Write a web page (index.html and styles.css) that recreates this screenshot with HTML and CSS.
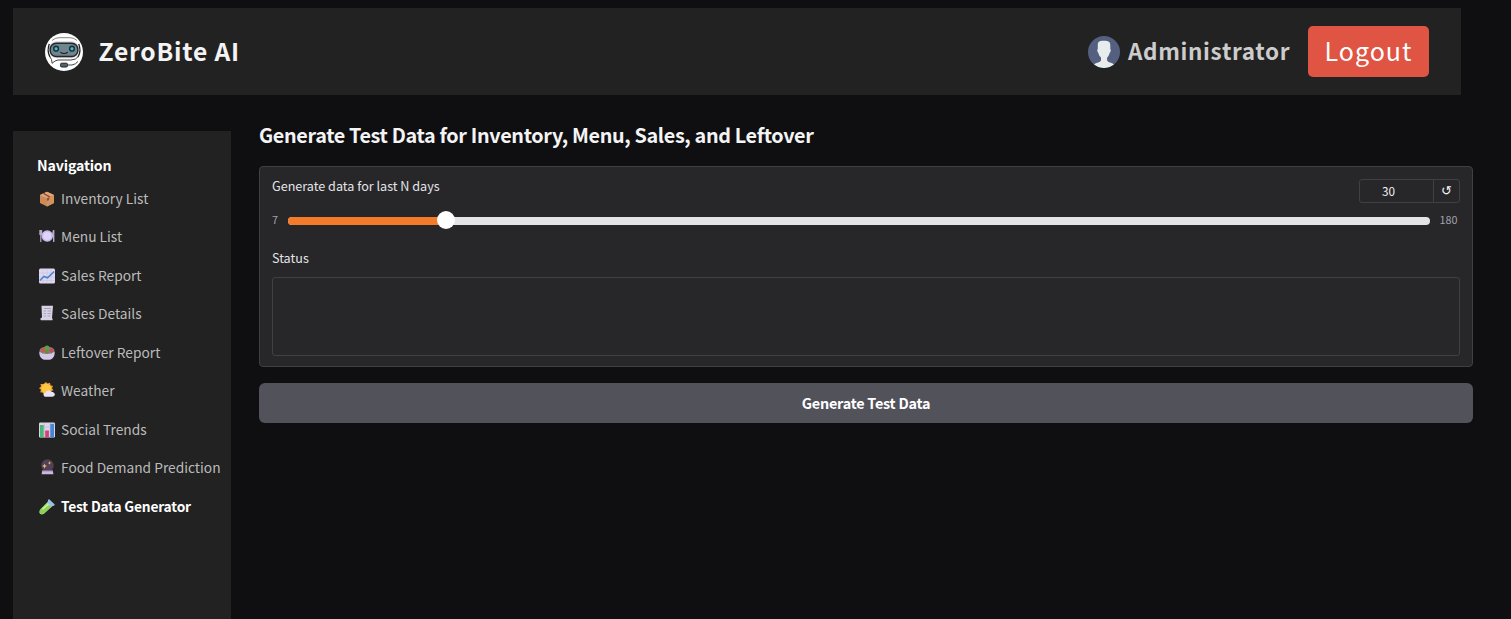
FILE: index.html
```html
<!DOCTYPE html>
<html lang="en">
<head>
<meta charset="utf-8">
<title>ZeroBite AI</title>
<link rel="stylesheet" href="styles.css">
</head>
<body>
<header class="topbar">
  <svg class="logo" viewBox="0 0 38 38">
    <circle cx="19" cy="19" r="19" fill="#fff"/>
    <path d="M7 7.5Q10 4.7 14 4.7H25Q29 4.7 32 7.5" fill="none" stroke="#666" stroke-width=".8"/>
    <path d="M4.3 11Q1.8 18 5 24M33.7 11Q36.4 18 33 24" fill="none" stroke="#222" stroke-width="1.4"/>
    <rect x="3.8" y="8.2" width="30.4" height="17" rx="8" fill="#d5d4d6"/>
    <rect x="5.2" y="10.2" width="27.6" height="13.3" rx="6" fill="#70858f" stroke="#20282c" stroke-width="1.4"/>
    <circle cx="11.1" cy="15.7" r="2.4" fill="#4d7885" stroke="#123640" stroke-width="1.4"/>
    <circle cx="27" cy="15.7" r="2.4" fill="#4d7885" stroke="#123640" stroke-width="1.4"/>
    <circle cx="11.1" cy="15.7" r="1.3" fill="#63b6c5"/><circle cx="27" cy="15.7" r="1.3" fill="#63b6c5"/>
    <path d="M15.4 19.2Q19 21.8 22.7 19.2" fill="none" stroke="#111b20" stroke-width="1.2"/>
    <path d="M5 24Q7 26 7.1 30.3Q10.2 27.2 13 27H26Q31 27 33.8 23M22.5 32H27Q31 31.2 33 28.5" fill="none" stroke="#444" stroke-width="1"/>
    <rect x="15.5" y="30.2" width="7" height="3.8" rx="1.2" fill="#52636b" stroke="#1c2225"/>
  </svg>
  <div class="brand">ZeroBite AI</div>
  <svg class="avatar" viewBox="0 0 32 32">
    <circle cx="16" cy="16" r="16" fill="#556080"/>
    <path d="M6 28.5C8 26.4 13 26.5 13 24V21.5C10.9 20 10.6 17.3 10.2 16.5C9.1 15.8 9 13.7 9.8 13.1V8.5C9.8 5.2 12.8 4.8 16.5 4.8C20.3 4.8 22.3 6 22.3 9V13.1C23 13.7 22.9 15.8 21.8 16.5C21.4 18 20.8 20.3 19.1 21.5V24C19.1 26.5 24 26.4 26 28.5A16 16 0 0 1 6 28.5Z" fill="#e7eced"/>
  </svg>
  <div class="user">Administrator</div>
  <button class="logout">Logout</button>
</header>
<div class="page">
  <nav class="sidebar">
    <div class="nav-title">Navigation</div>
    <a class="nav-item"><svg viewBox="0 0 16 16"><path d="M1 4L8 .8L15 4V12L8 15.5L1 12Z" fill="#cc8a59"/><path d="M1 4L8 .8L15 4L8 7.3Z" fill="#e2a773"/><path d="M8 7.3L15 4V12L8 15.5Z" fill="#d4935e"/><path d="M3.8 2.7L5.2 2.1L11.5 5.5L10 6.4ZM8 7.3L10.2 6.3V9L8 10Z" fill="#875343"/></svg><span>Inventory List</span></a>
    <a class="nav-item"><svg viewBox="0 0 16 16"><path d="M.3 2V7H1.2V14H2.4V7H3.2V2M14 2Q12.9 4 13.1 9H14V14H15.4V2Z" fill="#b7a9c4"/><circle cx="8.2" cy="8" r="5.8" fill="#c9b9ef"/><circle cx="8.2" cy="8" r="4" fill="#dfd5fa"/></svg><span>Menu List</span></a>
    <a class="nav-item"><svg viewBox="0 0 16 16"><rect y=".5" width="16" height="15" rx="1.5" fill="#ded7ee"/><path d="M4 1V15M8 1V15M12 1V15M0 5H16M0 9H16M0 12.5H16" stroke="#c9c3dc" stroke-width=".6"/><path d="M.8 12.5L5 8.5L8.5 9.8L15.2 3.5" fill="none" stroke="#4386d4" stroke-width="1.6"/></svg><span>Sales Report</span></a>
    <a class="nav-item"><svg viewBox="0 0 16 16"><path d="M2.5 .8H14L13 13Q14 14 13.5 15.2H2Q.5 14 2 12.7H3Z" fill="#d9d2e7"/><path d="M5 3.5H12M4.8 6H7M8.5 6H12M4.7 8.5H7M8.5 8.5H11.8M4.6 11H7M8.5 11H11.5" stroke="#a59db2" stroke-width=".9"/></svg><span>Sales Details</span></a>
    <a class="nav-item"><svg viewBox="0 0 16 16"><ellipse cx="8" cy="5.7" rx="7.5" ry="4" fill="#8e7b75"/><circle cx="4" cy="5" r="2.2" fill="#c95754"/><circle cx="8" cy="3" r="2.6" fill="#5f9e45"/><circle cx="12.5" cy="5.2" r="2" fill="#cc4962"/><circle cx="7.8" cy="6.8" r="2" fill="#668c3d"/><path d="M.2 6.5Q3 9 8 9Q13 9 15.8 6.5Q15.8 13.5 11 14.8H5Q.2 13.5 .2 6.5Z" fill="#d4c7e7"/></svg><span>Leftover Report</span></a>
    <a class="nav-item"><svg viewBox="0 0 16 16"><path d="M7 0L8.5 1.5L11 .8L11.5 3.2L14 4L13 6.3L14.3 8L7 13.4L4.5 12.6L4 10.8L1.2 10.2L2 7.8L0 6.2L2 4.5L1.5 2L4.5 2Z" fill="#eda12d"/><circle cx="7.2" cy="6.5" r="4.8" fill="#ffc545"/><path d="M7 14.8C4 14.8 3.8 11 6.7 10.6C7.2 8.3 10.8 7.5 12.3 9.7C16.8 9.8 17 14.8 13 14.8Z" fill="#e9e2f5"/></svg><span>Weather</span></a>
    <a class="nav-item"><svg viewBox="0 0 16 16"><rect y=".5" width="16" height="15" rx="1.2" fill="#ddd4eb"/><path d="M5.5 1V15M11 1V15M0 5H16M0 10H16" stroke="#bfb6cf" stroke-width=".6"/><rect x="1" y="3" width="3.7" height="12.5" fill="#4bb575"/><rect x="6.2" y="8.5" width="3.7" height="7" fill="#d73e77"/><rect x="11.3" y="1.8" width="3.7" height="13.7" fill="#4387d3"/></svg><span>Social Trends</span></a>
    <a class="nav-item"><svg viewBox="0 0 16 16"><circle cx="8.5" cy="6.5" r="6.2" fill="#514153"/><path d="M3.5 11H13.5L14.5 15.3H2.5Z" fill="#c9b8da"/><path d="M3.3 11.7H13.7" stroke="#6d5389"/><path d="M5.5 4.4L6.2 6.2L8 7L6.2 7.8L5.5 9.7L4.8 7.8L3 7L4.8 6.2ZM10.5 2.2L11 3.4L12.2 4L11 4.6L10.5 5.8L10 4.6L8.8 4L10 3.4Z" fill="#ecbb76"/></svg><span>Food Demand Prediction</span></a>
    <a class="nav-item active"><svg viewBox="0 0 16 16"><path d="M9 2.5L13.5 7L5 14.8Q2.6 16 1 14.7Q-.3 13 1.2 10.5Z" fill="#a8cfc0"/><path d="M6.8 5L12 7.5L4.8 14.5Q2.6 15.6 1.2 14.5Q0 13 1.5 10.7Z" fill="#8bd34b"/><path d="M3.6 10.2L9.4 5.2" stroke="#cdf291" stroke-width="1.6"/><path d="M9 .8L10.2 .3L15.8 5.4L15 6.8L12.5 7.2L8.8 3.6Z" fill="#9abfe8"/></svg><span>Test Data Generator</span></a>
  </nav>
  <main class="content">
    <h2 class="heading"><span>Generate Test Data for Inventory, Menu, Sales, and Leftover</span></h2>
    <section class="panel">
      <div class="panel-head">
        <label class="label days">Generate data for last N days</label>
        <div class="number"><div class="value">30</div><div class="reset">↺</div></div>
      </div>
      <div class="slider"><span class="limit">7</span><div class="track"><div class="fill"></div><div class="thumb"></div></div><span class="limit max">180</span></div>
      <div class="label status">Status</div>
      <div class="textbox"></div>
    </section>
    <button class="generate"><span>Generate Test Data</span></button>
  </main>
</div>
</body>
</html>
```
FILE: styles.css
```css
* { box-sizing: border-box; }
body { margin: 0; height: 619px; overflow: hidden; padding: 8px 38px 0 13px; background: #0f0f11; color: #f4f4f5; font-family: "Noto Sans CJK SC", "Noto Sans", sans-serif; }
button { border: 0; padding: 0; font-family: inherit; color: #fff; }
.topbar { display: flex; align-items: center; width: 1448px; height: 87px; padding: 0 32px; background: #222; white-space: nowrap; }
.logo { width: 38px; height: 38px; margin-right: 15.5px; }
.brand { padding-bottom: 3px; font-size: 24.6px; font-weight: 700; letter-spacing: .8px; line-height: 36px; }
.avatar { width: 32px; height: 32px; margin-left: auto; margin-right: 8px; }
.user { width: 180px; padding-bottom: 3px; font-size: 22.5px; font-weight: 700; letter-spacing: .65px; line-height: 36px; color: #ccc; }
.logout { width: 121px; height: 51px; padding-bottom: 2px; border-radius: 5px; background: #df5442; font-size: 25px; letter-spacing: 1px; line-height: 49px; }
.page { display: flex; gap: 28px; }
.sidebar { width: 218px; height: 488px; margin-top: 36px; padding: 23px 0 0 24px; background: #222; white-space: nowrap; }
.nav-title { height: 25px; line-height: 22px; font-size: 14.2px; font-weight: 700; letter-spacing: -.15px; color: #fff; }
.nav-item { display: flex; align-items: center; gap: 6px; height: 38.5px; padding-left: 2px; font-size: 13.75px; line-height: 22px; color: #bbb; }
.nav-item:nth-child(odd) { padding-bottom: 1px; }
.nav-item svg { width: 16px; height: 16px; flex: none; }
.nav-item.active { color: #fff; font-weight: 700; letter-spacing: -.19px; }
.nav-item:nth-child(even) svg { margin-top: .5px; }
.content { width: 1214px; }
.heading { margin: 24px 0 16px; font-size: 19.8px; font-weight: 700; letter-spacing: -.34px; line-height: 31px; white-space: nowrap; }
.panel { height: 201px; padding: 12px; border: 1px solid #3f3f46; border-radius: 4px; background: #27272a; }
.panel-head { display: flex; justify-content: space-between; height: 24px; }
.label { font-size: 12.6px; line-height: 16px; color: #e4e4e7; }
.days { line-height: 14px; }
.number { display: flex; width: 101px; height: 24px; border: 1px solid #3f3f46; border-radius: 3px; }
.value { width: 74px; padding-right: 16px; border-right: 1px solid #3f3f46; text-align: center; font-size: 11.7px; line-height: 22px; }
.reset { flex: 1; text-align: center; font-size: 13px; line-height: 19px; }
.slider { display: flex; align-items: center; height: 16px; margin-top: 10px; }
.limit { width: 16px; padding-bottom: 4px; font-size: 10.8px; line-height: 16px; color: #a1a1aa; }
.max { width: 30px; padding-left: 9.5px; }
.track { display: flex; align-items: center; width: 1142px; height: 8px; border-radius: 4px; background: #e4e4e7; }
.fill { width: 156px; height: 8px; border-radius: 4px 0 0 4px; background: #f47b2a; }
.thumb { width: 18px; height: 18px; margin: -2px 0 0 -7px; border-radius: 50%; background: #fff; }
.status { margin-top: 21px; }
.textbox { height: 79px; margin-top: 11px; border: 1px solid #3f3f46; border-radius: 3px; }
.generate { display: block; width: 100%; height: 40px; margin-top: 16px; border-radius: 6px; background: #52525b; font-size: 14.4px; font-weight: 700; letter-spacing: -.24px; line-height: 40px; }
```
